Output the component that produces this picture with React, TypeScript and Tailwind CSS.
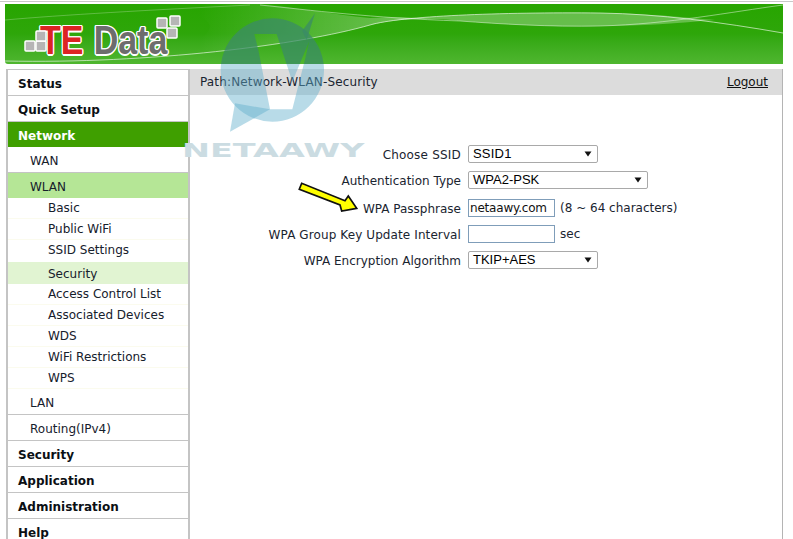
const top = ["Status", "Quick Setup"];
const subs = [
  { t: "Basic", c: "h-[21px] pb-[1px] border-b border-[#fbfbee]" },
  { t: "Public WiFi", c: "h-[21px] pb-[1px] border-b border-[#fbfbee]" },
  { t: "SSID Settings", c: "h-[22px] pb-[2px]" },
  { t: "Security", c: "h-[22px] pt-[2px] bg-[#e1f4d2]" },
  { t: "Access Control List", c: "h-[21px] pb-[1px] border-b border-[#fbfbee]" },
  { t: "Associated Devices", c: "h-[21px] border-b border-[#fbfbee]" },
  { t: "WDS", c: "h-[21px] border-b border-[#fbfbee]" },
  { t: "WiFi Restrictions", c: "h-[21px] border-b border-[#fbfbee]" },
  { t: "WPS", c: "h-[21px] border-b border-[#fbfbee]" },
];

function Main({ t, green }: { t: string; green?: boolean }) {
  return (
    <div className={`pl-[10px] pt-[2px] flex items-center font-bold ${green ? "h-[25px] bg-[#3f9f00] text-white" : "h-[26px] text-[#0b0f14] border-b border-[#c4c4c4]"}`}>
      {t}
    </div>
  );
}

function Second({ t, bg }: { t: string; bg?: boolean }) {
  return (
    <div className={`pl-[22px] pt-[2px] flex items-center ${bg ? "h-[25px] bg-[#b5e696]" : "h-[26px] border-b border-[#c4c4c4]"}`}>
      {t}
    </div>
  );
}

function Row({ label, children, className = "" }: { label: string; children: React.ReactNode; className?: string }) {
  return (
    <div className={`h-[26px] flex items-center ${className}`}>
      <div className="w-[275px] text-right pr-[7px] pt-[1px] shrink-0">{label}</div>
      {children}
    </div>
  );
}

function Select({ v, w }: { v: string; w: string }) {
  return (
    <div className={`${w} h-[18px] border border-[#a9a9a9] rounded-[2px] bg-white flex items-center justify-between pl-[4px] pr-[5px] font-['Liberation_Sans',sans-serif] text-[13px] text-black`}>
      <span>{v}</span>
      <svg width="8" height="6" viewBox="0 0 8 6"><path d="M0.5 0.5H7.5L4 5.5Z" fill="#111" /></svg>
    </div>
  );
}

const mark = "M17 180a155 155 0 1 0 310 0a155 155 0 1 0 -310 0ZM118 72L185 72L232 215L282 95L272 140L232 298L165 298L130 120Z";

export default function App() {
  return (
    <div className="relative w-[793px] h-[539px] overflow-hidden bg-white font-['DejaVu_Sans',sans-serif] text-[12px] text-[#1a2430]">
      <div className="h-[3px] border-t border-[#c8c8c8] mt-[1px]" />
      <header className="relative ml-[5px] w-[778px] h-[60px] rounded-bl-[3px] bg-gradient-to-b from-[#27a500] via-[#2ea60a] to-[#4fb62f] overflow-hidden">
        <svg className="absolute inset-0" width="778" height="60" viewBox="5 4 778 60" fill="none">
          <defs>
            <linearGradient id="wave" x1="200" x2="400" y1="0" y2="0" gradientUnits="userSpaceOnUse">
              <stop offset="0" stopColor="#fff" stopOpacity="0" />
              <stop offset="1" stopColor="#fff" stopOpacity="0.3" />
            </linearGradient>
          </defs>
          <path d="M5 61C150 64 300 45 370 25C390 19 420 17 460 21C420 18 400 16 370 18C330 14 300 8 260 4L120 4C220 10 250 30 140 62Z" fill="url(#wave)" />
          <path d="M370 25C400 16 500 12 600 13C660 14 690 18 715 20C680 23 640 26 600 26C550 27 500 24 460 21C430 17 400 18 370 25Z" fill="#fff" fillOpacity="0.28" />
          <path d="M5 20C60 15 150 10 250 5" stroke="#fff" strokeOpacity="0.25" />
          <path d="M5 61C150 64 300 45 370 25C400 16 500 12 600 13C660 14 720 22 783 33" stroke="#fff" strokeOpacity="0.6" />
          <path d="M260 5C310 10 370 18 460 21C500 24 550 27 600 26C670 24 730 12 783 5" stroke="#fff" strokeOpacity="0.45" />
        </svg>
        <div className="absolute left-[35px] top-[13px] flex items-baseline scale-x-[0.85] origin-left font-['Liberation_Sans',sans-serif] font-bold text-[40px] leading-[46px] [text-shadow:1.5px_0_0_#fff,-1.5px_0_0_#fff,0_1.5px_0_#fff,0_-1.5px_0_#fff,1px_1px_0_#fff,-1px_-1px_0_#fff,1px_-1px_0_#fff,-1px_1px_0_#fff]">
          <span className="text-[#dc2424] mr-[12px]">TE</span>
          <span className="text-[#6d6d6d]">Data</span>
        </div>
        <svg className="absolute inset-0" width="778" height="60" viewBox="0 0 778 60" fill="#b5b5b5" stroke="#fff" strokeWidth="1.5">
          <rect x="20" y="37" width="10" height="10" rx="1" />
          <rect x="31" y="37" width="10" height="10" rx="1" />
          <rect x="31" y="27" width="10" height="10" rx="1" />
          <rect x="152" y="14" width="10" height="10" rx="1" />
          <rect x="165" y="12" width="10" height="10" rx="1" />
          <rect x="162" y="24" width="10" height="10" rx="1" />
        </svg>
      </header>

      <div className="flex ml-[5px] mt-[5px] w-[778px] h-[470px] border-r border-[#b4b4b4]">
        <aside className="ml-[1px] w-[184px] shrink-0 border-x-2 border-t border-[#c4c4c4] text-[#16202c]">
          {top.map((t) => <Main key={t} t={t} />)}
          <Main t="Network" green />
          <Second t="WAN" />
          <Second t="WLAN" bg />
          {subs.map((s) => (
            <div key={s.t} className={`pl-[40px] flex items-center ${s.c}`}>
              {s.t}
            </div>
          ))}
          <Second t="LAN" />
          <Second t="Routing(IPv4)" />
          {["Security", "Application", "Administration", "Help"].map((t) => <Main key={t} t={t} />)}
        </aside>
        <main className="flex-1 min-w-0">
          <div className="h-[26px] bg-[#dcdcdc] flex items-center justify-between pl-[10px] pr-[14px]">
            <span className="tracking-[0.15px] text-[#1a2430]">Path:Network-WLAN-Security</span>
            <a className="underline text-[#111]">Logout</a>
          </div>
          <form className="pt-[46px] pl-[3px]">
            <Row label="Choose SSID" className="tracking-[0.2px]"><Select v="SSID1" w="w-[130px]" /></Row>
            <Row label="Authentication Type"><Select v="WPA2-PSK" w="w-[180px]" /></Row>
            <Row label="WPA Passphrase" className="mt-[2px]">
              <div className="w-[87px] h-[18px] border border-[#7f9db9] pl-[1px] flex items-center text-[#111] tracking-[-0.2px] whitespace-nowrap overflow-hidden">netaawy.com</div>
              <span className="ml-[5px]">(8 ~ 64 characters)</span>
            </Row>
            <Row label="WPA Group Key Update Interval" className="tracking-[0.1px]">
              <div className="w-[87px] h-[18px] border border-[#7f9db9]" />
              <span className="ml-[5px]">sec</span>
            </Row>
            <Row label="WPA Encryption Algorithm"><Select v="TKIP+AES" w="w-[130px]" /></Row>
          </form>
        </main>
      </div>

      {/* arrow annotation */}
      <svg className="absolute left-[298px] top-[181px]" width="62" height="34" viewBox="0 0 62 34">
        <path d="M3.7 2.3L1.3 8.3L42 24L43.7 30L58.7 27.3L50.3 15L47 19.7Z" fill="#ffff00" stroke="#111" strokeWidth="1.7" />
      </svg>

      {/* watermark */}
      <svg className="absolute left-[215px] top-[10px] pointer-events-none" width="120" height="125" viewBox="0 0 360 375">
        <defs>
          <clipPath id="onHeader"><rect x="0" y="0" width="360" height="162" /></clipPath>
          <clipPath id="belowHeader"><rect x="0" y="162" width="360" height="213" /></clipPath>
        </defs>
        <g clipPath="url(#onHeader)" fill="#3a8a68" fillOpacity="0.72">
          <path fillRule="evenodd" d={mark} />
          <path d="M262 62L300 10L275 90Z" />
        </g>
        <g clipPath="url(#belowHeader)" fill="#62afcd" fillOpacity="0.45">
          <path fillRule="evenodd" d={mark} />
          <path d="M60 280L165 298L45 365Z" />
        </g>
      </svg>
      <div className="absolute left-[182px] top-[138px] font-bold text-[19px] leading-[24px] text-[#cbdce2] scale-x-[1.76] origin-left pointer-events-none">NETAAWY</div>
    </div>
  );
}
